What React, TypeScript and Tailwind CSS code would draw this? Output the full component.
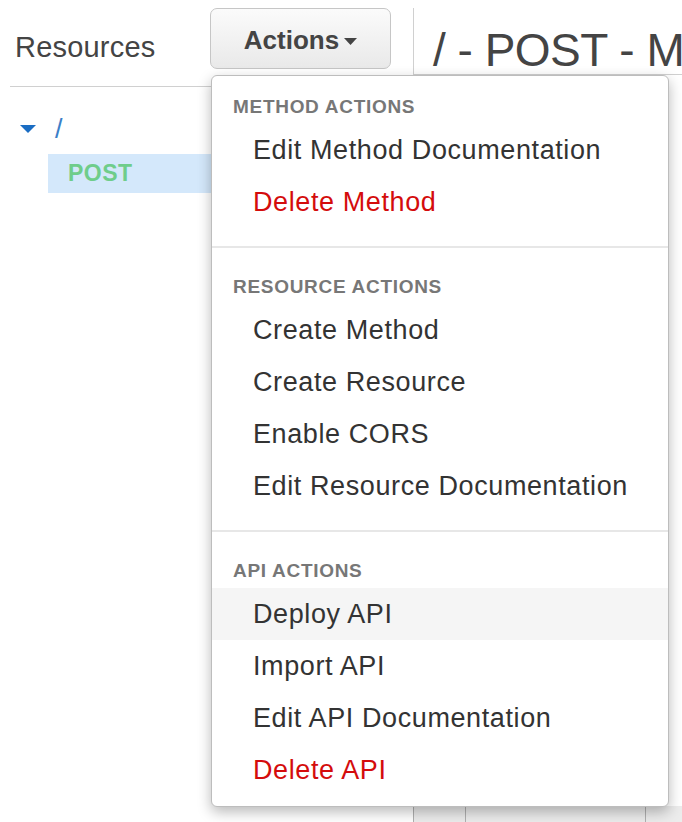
import React from "react";

type Item = { label: string; danger?: boolean; active?: boolean };
type Group = { title: string; items: Item[] };

const groups: Group[] = [
  {
    title: "Method Actions",
    items: [{ label: "Edit Method Documentation" }, { label: "Delete Method", danger: true }],
  },
  {
    title: "Resource Actions",
    items: [
      { label: "Create Method" },
      { label: "Create Resource" },
      { label: "Enable CORS" },
      { label: "Edit Resource Documentation" },
    ],
  },
  {
    title: "API Actions",
    items: [
      { label: "Deploy API", active: true },
      { label: "Import API" },
      { label: "Edit API Documentation" },
      { label: "Delete API", danger: true },
    ],
  },
];

function ActionsMenu() {
  return (
    <div className="absolute left-[1px] top-[67px] z-10 w-[458px] rounded-[6px] border border-[#bdbdbd] bg-white pt-[20px] pb-[10px] shadow-[0_5px_14px_rgba(0,0,0,0.28)]">
      {groups.map((g, i) => (
        <div key={g.title}>
          {i > 0 && <div className="mt-[18px] h-[2px] bg-[#e7e7e7]" />}
          <div className={i > 0 ? "pt-[28px]" : ""}>
            <div className="mb-[6px] h-[22px] pl-[21px] text-[19px] font-bold uppercase leading-[22px] tracking-[0.7px] text-[#777]">
              {g.title}
            </div>
            {g.items.map((it) => (
              <div
                key={it.label}
                className={`flex h-[52px] items-center whitespace-nowrap pl-[41px] text-[27px] tracking-[0.6px] ${
                  it.active ? "bg-[#f5f5f5]" : ""
                } ${it.danger ? "text-[#d40c0c]" : "text-[#333]"}`}
              >
                {it.label}
              </div>
            ))}
          </div>
        </div>
      ))}
    </div>
  );
}

export default function App() {
  return (
    <div className="relative flex h-[822px] w-[682px] overflow-hidden bg-white font-['Liberation_Sans',Arial,sans-serif]">
      {/* resources tree */}
      <div className="w-[413px] shrink-0 pl-[10px]">
        <div className="flex h-[87px] items-start border-b border-[#d0d0d0]">
          <div className="w-[200px] pl-[5px] pt-[32px] text-[29px] leading-[30px] tracking-[0.2px] text-[#444]">
            Resources
          </div>
          <div className="relative mt-[8px]">
            <button className="flex h-[61px] w-[181px] items-center justify-center gap-[5px] rounded-[7px] border border-[#c6c6c6] bg-gradient-to-b from-[#fbfbfb] to-[#e9e9e9] pt-[3px] text-[26px] font-bold text-[#444]">
              Actions
              <svg width="13" height="7" viewBox="0 0 13 7" className="mt-[2px]">
                <path d="M0 0h13L6.5 7z" fill="#444" />
              </svg>
            </button>
            <ActionsMenu />
          </div>
        </div>
        <div className="mt-[22px] flex h-[40px] items-center pl-[10px]">
          <svg width="16" height="8" viewBox="0 0 16 8">
            <path d="M0 0h16L8 8z" fill="#1a6dc3" />
          </svg>
          <span className="ml-[19px] text-[27px] text-[#3b80c8]">/</span>
        </div>
        <div className="ml-[38px] mt-[5px] flex h-[39px] items-center bg-[#d4e8fb] pl-[20px] text-[23px] font-bold tracking-[0.5px] text-[#6fcd8b]">
          POST
        </div>
      </div>

      {/* method pane */}
      <div className="min-w-0 flex-1">
        <div className="mt-[8px] h-[67px] overflow-hidden border-b border-l border-[#d0d0d0] pl-[19px] pt-[19px] text-[46px] leading-none whitespace-nowrap tracking-[-0.5px] text-[#444]">
          / - POST - Method Execution
        </div>
        <div className="mt-[731px] flex h-[20px] border-l border-[#b0b0b0] bg-[#ececec]">
          <div className="w-[52px] border-r border-[#b0b0b0]" />
          <div className="w-[180px] border-r border-[#b0b0b0]" />
        </div>
      </div>
    </div>
  );
}
